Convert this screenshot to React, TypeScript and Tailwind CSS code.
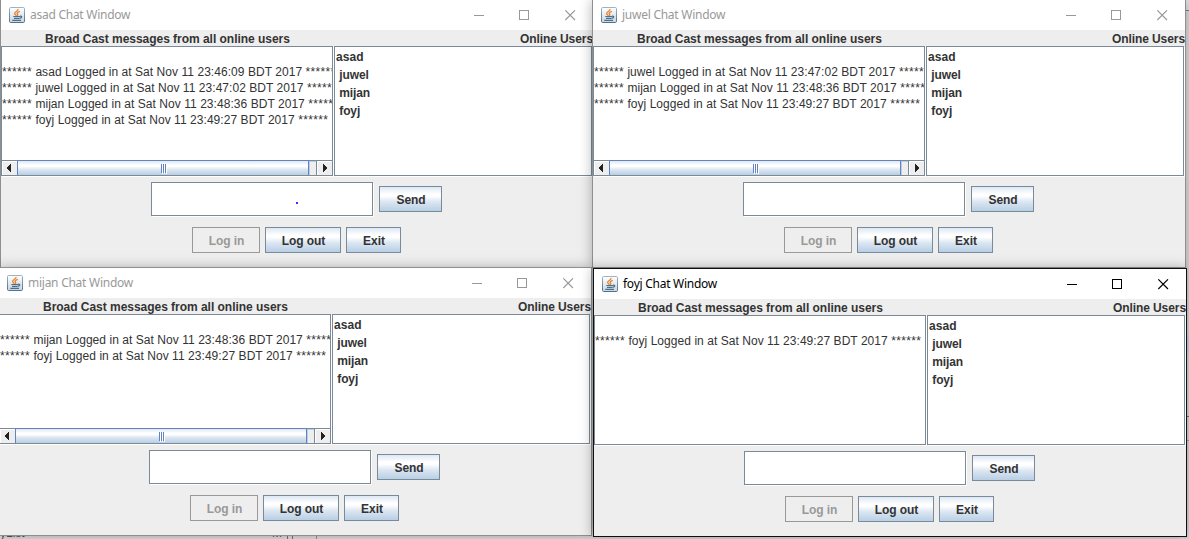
import React from "react";

const JavaIcon = () => (
  <svg width="16" height="16" viewBox="0 0 16 16" className="block shrink-0">
    <defs>
      <linearGradient id="cupBg" x1="0" y1="0" x2="0" y2="1">
        <stop offset="0" stopColor="#ffffff" />
        <stop offset="1" stopColor="#cbd5dc" />
      </linearGradient>
      <linearGradient id="cupEdge" x1="0" y1="0" x2="0" y2="1">
        <stop offset="0" stopColor="#9db4c8" />
        <stop offset="1" stopColor="#4f708e" />
      </linearGradient>
    </defs>
    <rect x="0.5" y="0.5" width="15" height="15" rx="1.2" fill="url(#cupBg)" stroke="url(#cupEdge)" />
    <path d="M9 2C9.7 4 5.2 4.8 5.6 6.5C5.9 7.4 7 7.6 7.2 8.7M10.8 4.4C8.3 5.2 7.7 6.1 8.5 6.9C9 7.6 8.7 8.1 8.3 8.8" fill="none" stroke="#e8812a" strokeWidth="1.35" />
    <path d="M4.3 9.5H11M5 11.3H10.3M3.3 13.4H12M10.8 9.3C13.6 8.5 13.4 10.9 10.6 11.4" fill="none" stroke="#476f90" strokeWidth="1.2" />
  </svg>
);

type Log = { user: string; time: string };

type Win = {
  user: string;
  logs: Log[];
  scroll: boolean;
  active?: boolean;
  dot?: boolean;
  place: string;
};

const asad = { user: "asad", time: "23:46:09" };
const juwel = { user: "juwel", time: "23:47:02" };
const mijan = { user: "mijan", time: "23:48:36" };
const foyj = { user: "foyj", time: "23:49:27" };

const windows: Win[] = [
  { user: "asad", logs: [asad, juwel, mijan, foyj], scroll: true, dot: true, place: "left-0 -top-px" },
  { user: "juwel", logs: [juwel, mijan, foyj], scroll: true, place: "left-[592px] -top-px" },
  { user: "mijan", logs: [mijan, foyj], scroll: true, place: "-left-[2px] top-[267px]" },
  { user: "foyj", logs: [foyj], scroll: false, active: true, place: "left-[593px] top-[268px]" },
];

const metal = "bg-[linear-gradient(to_bottom,#dde8f3_0%,#ffffff_30%,#ffffff_38%,#dbe6f1_62%,#b8cfe5_100%)]";

const Button = ({ label, width, disabled }: { label: string; width: string; disabled?: boolean }) => (
  <button
    className={`${width} flex h-[26px] shrink-0 items-center justify-center border pt-[2px] pl-px text-[12px] font-bold leading-[14px] tracking-[-0.05px] ${
      disabled ? "border-[#999999] bg-[#eeeeee] text-[#999999]" : `border-[#7a8a99] text-[#333333] ${metal}`
    }`}
  >
    {label}
  </button>
);

const Arrow = ({ left }: { left?: boolean }) => (
  <svg width="4" height="8" viewBox="0 0 4 8" className="block" shapeRendering="crispEdges">
    <path
      d={left ? "M4 0H3V1H2V2H1V3H0V5H1V6H2V7H3V8H4Z" : "M0 0H1V1H2V2H3V3H4V5H3V6H2V7H1V8H0Z"}
      fill="#222"
    />
  </svg>
);

const ScrollBar = () => (
  <div className="flex h-[15px] border-t border-[#7a8a99] bg-[#eeeeee]">
    <div className="flex w-[15px] items-start border-t border-l border-white pl-[4px] pt-[2px]">
      <Arrow left />
    </div>
    <div className={`-mt-px flex h-[15px] w-[292px] items-center justify-center gap-px border-t border-r border-l border-[#6382bf] ${metal}`}>
      <i className="h-[9px] w-px bg-[#6382bf] shadow-[1px_1px_0_#fff]" />
      <i className="h-[9px] w-px bg-[#6382bf] shadow-[1px_1px_0_#fff]" />
      <i className="h-[9px] w-px bg-[#6382bf] shadow-[1px_1px_0_#fff]" />
    </div>
    <div className="w-[7px] border-t border-l border-[#b8cfe5]" />
    <div className="flex flex-1 items-start border-l border-[#7a8a99] pl-[6px] pt-[3px] shadow-[inset_1px_1px_0_#fff]">
      <Arrow />
    </div>
  </div>
);

const Controls = ({ active }: { active?: boolean }) => (
  <svg width="110" height="11" viewBox="0 0 110 11" className="block" fill="none" stroke={active ? "#000" : "#999"}>
    <path d="M0 5.5H10" shapeRendering="crispEdges" />
    <rect x="45.5" y="0.5" width="9" height="9" shapeRendering="crispEdges" />
    <path d="M91.3 0.3L101 10M101 0.3L91.3 10" strokeWidth="1.1" />
  </svg>
);

const Stars = () => <span className="tracking-[0.33px]">******</span>;

const ChatWindow = ({ user, logs, scroll, active, dot, place }: Win) => (
  <section
    className={`absolute ${place} h-[269px] w-[594px] border bg-[#eeeeee] ${
      active ? "border-[#101010] shadow-[0_1px_12px_rgba(0,0,0,0.35)]" : "border-[#8f8f8f] shadow-[0_1px_12px_rgba(0,0,0,0.3)]"
    }`}
  >
    <header className="flex h-[30px] items-center bg-white pl-[8px]">
      <JavaIcon />
      <h1
        className={`ml-[5px] flex-1 whitespace-nowrap font-['Noto_Sans',sans-serif] text-[12px] leading-[16px] tracking-[-0.26px] ${
          active ? "text-black" : "text-[#999999]"
        }`}
      >
        {user} Chat Window
      </h1>
      <div className="mr-[9px]">
        <Controls active={active} />
      </div>
    </header>
    <div className="flex h-4 items-center justify-between pl-[44px] text-[12px] font-bold leading-[16px]">
      <span className="pt-[2px] tracking-[-0.03px]">Broad Cast messages from all online users</span>
      <span className="pt-[2px] tracking-[-0.08px]">Online Users</span>
    </div>
    <div className="flex h-[131px] gap-px">
      <div className="flex h-[130px] w-[332px] flex-col border border-[#7a8a99] bg-white shadow-[1px_1px_0_#fff]">
        <div className="flex-1 overflow-hidden whitespace-nowrap pt-[17px] text-[12px] leading-[16px] tracking-[0.05px]">
          {logs.map((l) => (
            <p key={l.user}>
              <Stars /> {l.user} Logged in at Sat Nov 11 {l.time} BDT 2017 <Stars />
            </p>
          ))}
        </div>
        {scroll && <ScrollBar />}
      </div>
      <div className="h-[130px] w-[258px] whitespace-pre border border-[#7a8a99] bg-white pl-px pt-px text-[12px] font-bold leading-[18px] tracking-[-0.1px] shadow-[1px_1px_0_#fff]">
        <p className="tracking-[0.1px]">asad</p>
        <p> juwel</p>
        <p> mijan</p>
        <p> foyj</p>
      </div>
    </div>
    <div className="mt-[5px] flex h-[34px] items-center gap-[6px] pl-[150px]">
      <div className="flex h-[34px] w-[222px] items-end border border-[#7a8a99] bg-white pb-[11px] pl-[144px] shadow-[1px_1px_0_#fff]">
        {dot && <i className="size-[2px] bg-[#3030ff]" />}
      </div>
      <Button label="Send" width="w-[63px]" />
    </div>
    <div className="mt-[11px] flex gap-[5px] pl-[191px]">
      <Button label="Log in" width="w-[68px]" disabled />
      <Button label="Log out" width="w-[76px]" />
      <Button label="Exit" width="w-[55px]" />
    </div>
  </section>
);

export default function App() {
  return (
    <main className="relative h-[539px] w-[1189px] overflow-hidden bg-[#dcdcdc] font-['Liberation_Sans',Arial,sans-serif] text-[#333333]">
      <div className="flex h-full">
        <div className="flex flex-1 flex-col justify-end">
          <div className="flex h-[12px] bg-[#e4e4e4] text-[12px] leading-[12px] text-[#555]">
            <span className="w-[272px]">yList</span>
            <span className="w-[15px]">M</span>
            <span className="w-[6px] border-x border-[#777]" />
            <span className="w-[24px] border-r border-[#999]" />
          </div>
        </div>
        <div className="flex w-[5px] flex-col">
          <div className="h-[11px] border-b border-[#5f8ab8] bg-[#e4e4e4]" />
          <div className="h-[324px]" />
          <div className="h-[18px] bg-[#cfd6e4]" />
          <div className="h-[64px] border-b border-[#777]" />
          <div className="h-[24px] border-b border-[#aaa]" />
        </div>
      </div>
      {windows.map((w) => (
        <ChatWindow key={w.user} {...w} />
      ))}
    </main>
  );
}
